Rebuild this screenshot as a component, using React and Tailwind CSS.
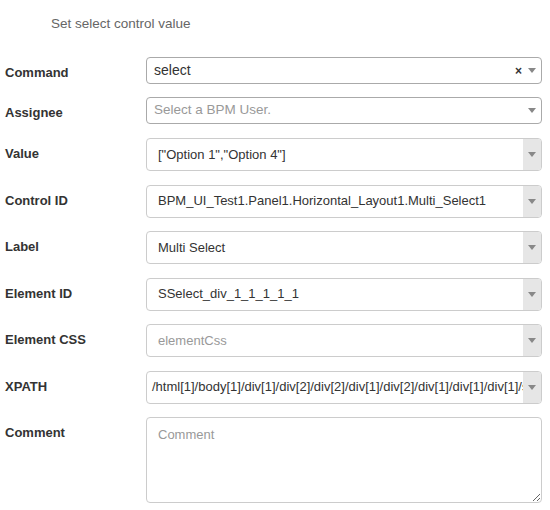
import React from 'react';

const font = { fontFamily: '"Liberation Sans", Arial, sans-serif' };

function Arrow() {
  return (
    <svg width="8" height="5" viewBox="0 0 8 5" className="shrink-0">
      <path d="M0 0 L8 0 L4 5 Z" fill="#888" />
    </svg>
  );
}

// select2-like box (Command, Assignee)
function Select2({ value, placeholder, clearable }) {
  return (
    <div className="flex-1 h-[27px] flex items-center border border-[#aaa] rounded-[4px] bg-white pl-[7px] pr-[5px]">
      <span className={`flex-1 truncate ${value ? 'text-[14px] text-[#333]' : 'text-[13.5px] text-[#999]'}`}>
        {value || placeholder}
      </span>
      {clearable && <span className="text-[12px] font-bold text-[#333] mr-[6px] leading-none">×</span>}
      <Arrow />
    </div>
  );
}

// input with gray dropdown button
function Combo({ value, placeholder, pad = 'pl-[11px]' }) {
  return (
    <div className="flex-1 h-[33px] flex border border-[#ccc] rounded-[4px] bg-white overflow-hidden">
      <div className={`flex-1 min-w-0 flex items-center ${pad} text-[13px] whitespace-nowrap overflow-hidden ${value ? 'text-[#333]' : 'text-[#999]'}`}>
        {value || placeholder}
      </div>
      <div className="w-[18px] shrink-0 bg-[#e6e6e6] flex items-center justify-center">
        <Arrow />
      </div>
    </div>
  );
}

function Row({ label, children }) {
  return (
    <div className="flex items-start">
      <div className="w-[141px] shrink-0 pt-[7px] leading-[18px] text-[13px] font-bold text-[#333]">{label}</div>
      {children}
    </div>
  );
}

export default function App() {
  return (
    <div className="w-[550px] h-[510px] bg-white pl-[5px] pr-[8px]" style={font}>
      <div className="pl-[46px] pt-[14px] h-[57px] text-[13.5px] text-[#666]">Set select control value</div>
      <div className="flex flex-col">
        <Row label="Command"><Select2 value="select" clearable /></Row>
        <div className="h-[13px]" />
        <Row label="Assignee"><Select2 placeholder="Select a BPM User." /></Row>
        <div className="h-[14px]" />
        <div className="flex flex-col gap-[13.5px]">
          <Row label="Value"><Combo value={'["Option 1","Option 4"]'} /></Row>
          <Row label="Control ID"><Combo value="BPM_UI_Test1.Panel1.Horizontal_Layout1.Multi_Select1" /></Row>
          <Row label="Label"><Combo value="Multi Select" /></Row>
          <Row label="Element ID"><Combo value="SSelect_div_1_1_1_1_1" /></Row>
          <Row label="Element CSS"><Combo placeholder="elementCss" /></Row>
          <Row label="XPATH">
            <Combo pad="pl-[5px]" value="/html[1]/body[1]/div[1]/div[2]/div[2]/div[1]/div[2]/div[1]/div[1]/div[1]/select[1]" />
          </Row>
          <Row label="Comment">
            <textarea
              placeholder="Comment"
              className="flex-1 h-[86px] border border-[#ccc] rounded-[4px] px-[11px] py-[7px] text-[13px] text-[#333] placeholder:text-[#999] outline-none"
              style={font}
            />
          </Row>
        </div>
      </div>
    </div>
  );
}
